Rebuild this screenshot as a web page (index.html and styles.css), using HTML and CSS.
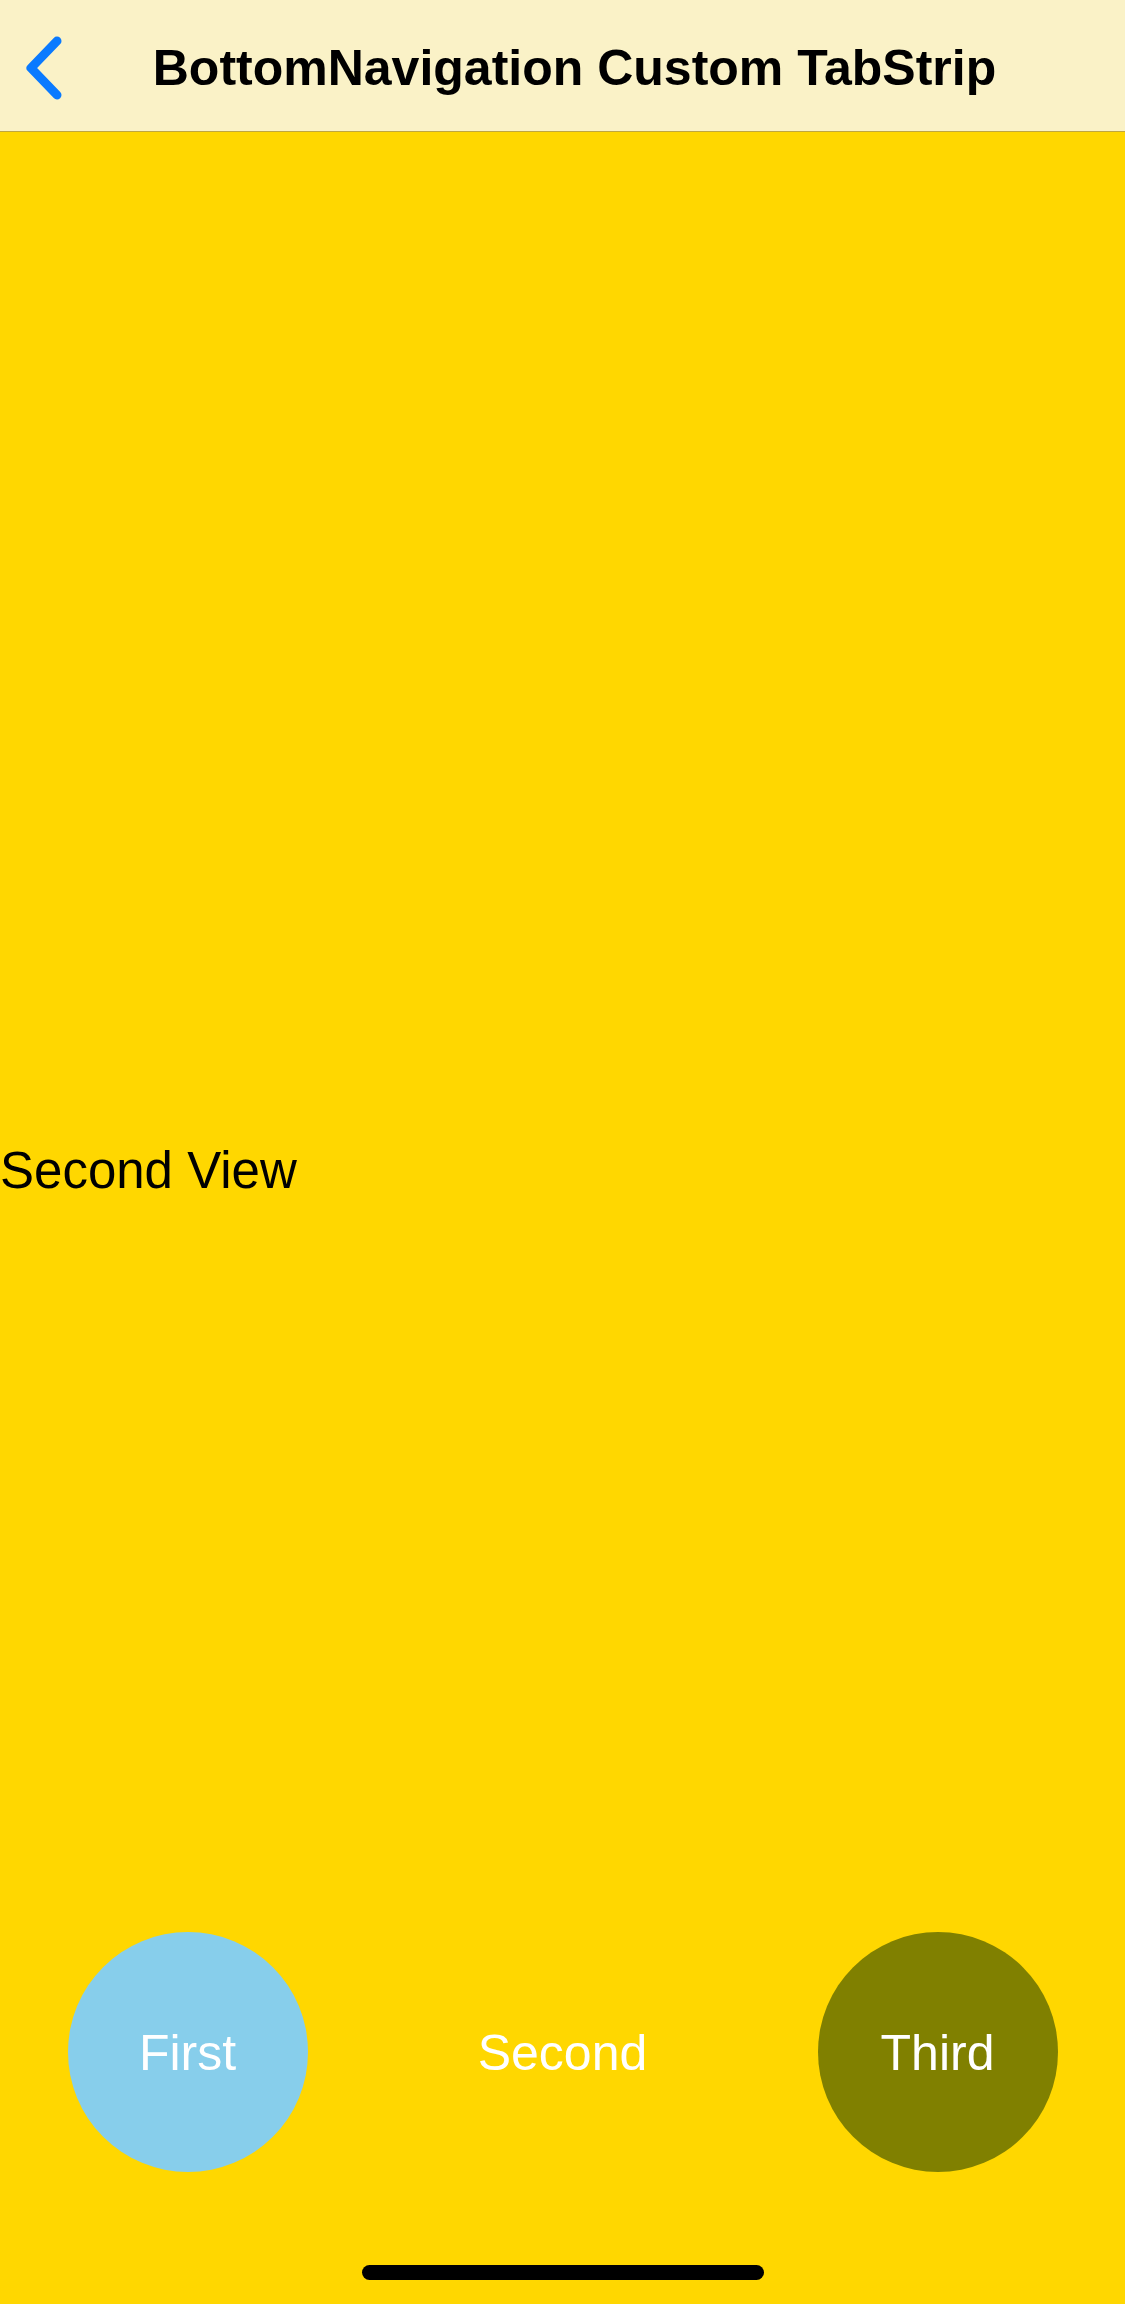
FILE: index.html
```html
<!DOCTYPE html>
<html>
<head>
<meta charset="utf-8">
<link rel="stylesheet" href="styles.css">
</head>
<body>
<div class="screen">
  <header class="navbar">
    <div class="back">
      <svg width="80" height="131" viewBox="0 0 80 131"><path d="M57 39 L31 66 L57 93" fill="none" stroke="#0A7AFF" stroke-width="9" stroke-linecap="round" stroke-linejoin="round"/></svg>
    </div>
    <div class="title">BottomNavigation Custom TabStrip</div>
    <div class="spacer"></div>
  </header>
  <main class="stage">
    <div class="content"><span class="label">Second View</span></div>
    <nav class="tabstrip">
      <div class="tab"><div class="bubble sky">First</div></div>
      <div class="tab"><div class="bubble">Second</div></div>
      <div class="tab"><div class="bubble olive">Third</div></div>
    </nav>
  </main>
  <div class="safe"><div class="home"></div></div>
</div>
</body>
</html>
```
FILE: styles.css
```css
html, body {
  margin: 0;
  padding: 0;
}
body {
  width: 1125px;
  height: 2304px;
  overflow: hidden;
  font-family: "Liberation Sans", Arial, sans-serif;
  background: #FFD700;
}
.screen {
  display: flex;
  flex-direction: column;
  height: 2304px;
}
.navbar {
  height: 131px;
  border-bottom: 1px solid #BFA640;
  background: #FAF2C7;
  display: grid;
  grid-template-columns: 92px 1fr 68px;
  align-items: center;
}
.back svg {
  display: block;
}
.title {
  text-align: center;
  font-size: 50px;
  font-weight: 700;
  letter-spacing: 0px;
  color: #000;
  line-height: 131px;
  padding-top: 3px;
}
.stage {
  height: 2070px;
  display: grid;
  grid-template-rows: 1fr;
  grid-template-columns: 1fr;
}
.content, .tabstrip {
  grid-area: 1 / 1;
}
.content {
  display: flex;
  align-items: center;
}
.label {
  font-size: 51px;
  color: #000;
  line-height: 1;
  padding-top: 6px;
}
.tabstrip {
  align-self: end;
  height: 300px;
  display: grid;
  grid-template-columns: repeat(3, 1fr);
}
.tab {
  display: flex;
  align-items: center;
  justify-content: center;
}
.bubble {
  width: 240px;
  height: 240px;
  border-radius: 50%;
  display: flex;
  align-items: center;
  justify-content: center;
  color: #fff;
  font-size: 50px;
  padding-top: 2px;
  box-sizing: border-box;
}
.sky {
  background: #87CEEB;
}
.olive {
  background: #808000;
}
.safe {
  flex: 1;
  display: flex;
  justify-content: center;
  align-items: flex-end;
  padding-bottom: 24px;
}
.home {
  width: 402px;
  height: 15px;
  border-radius: 8px;
  background: #000;
}
```
